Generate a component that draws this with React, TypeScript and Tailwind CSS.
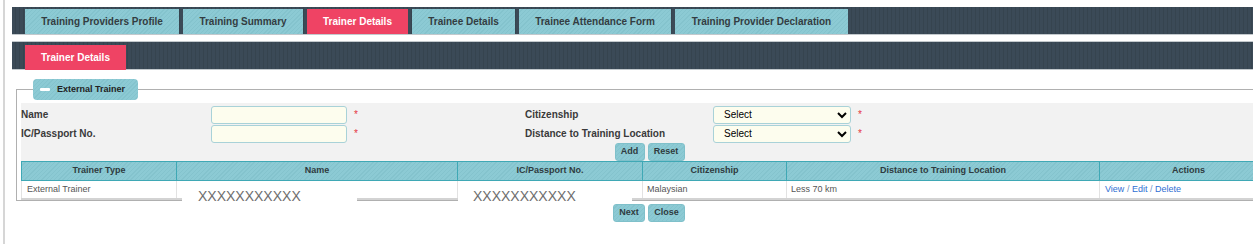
import React from "react"

const teal =
  "bg-[repeating-linear-gradient(135deg,#8ccad4_0px,#8ccad4_2px,#84c3cd_2px,#84c3cd_3px)]"
const dark =
  "bg-[repeating-linear-gradient(90deg,#3b4a57_0px,#3b4a57_3px,#36444f_3px,#36444f_4px)]"

const tabs = [
  { label: "Training Providers Profile", w: "w-[154px]" },
  { label: "Training Summary", w: "w-[120px]" },
  { label: "Trainer Details", w: "w-[101px]", active: true },
  { label: "Trainee Details", w: "w-[103px]" },
  { label: "Trainee Attendance Form", w: "w-[152px]" },
  { label: "Training Provider Declaration", w: "w-[173px]" },
]

const Btn = ({ children, w }: { children: React.ReactNode; w: string }) => (
  <button
    type="button"
    className={`${teal} ${w} h-[18px] rounded-[3px] border border-[#7fc0ca] text-[9px] font-bold text-[#2f3b40]`}
  >
    {children}
  </button>
)

const Redacted = ({ left, width, pad }: { left: string; width: string; pad: string }) => (
  <div
    className={`absolute top-[3px] ${left} ${width} ${pad} h-[20px] bg-white text-[14px] leading-[19px] text-[#6e6e6e] pt-[3px]`}
  >
    XXXXXXXXXXX
  </div>
)

export default function App() {
  return (
    <div className="flex w-[1253px] h-[244px] overflow-hidden bg-white font-['Liberation_Sans',Arial,sans-serif]">
      <div className="w-[3px] shrink-0" />
      <div className="w-[2px] shrink-0 bg-[#d6d6d6]" />
      <div className="w-[7px] shrink-0" />

      <div className="w-[1290px] shrink-0">
        {/* main tabs */}
        <div className={`mt-[7px] h-[28px] ${dark} border-b border-[#c3c9cd] flex items-end gap-[4px] pl-[13px]`}>
          {tabs.map((t) => (
            <div
              key={t.label}
              className={`${t.w} h-[25px] flex items-center justify-center text-[10px] font-bold ${
                t.active ? "bg-[#ef4364] text-white" : `${teal} text-[#333d42]`
              }`}
            >
              {t.label}
            </div>
          ))}
        </div>

        {/* sub tabs */}
        <div className={`mt-[6px] h-[29px] ${dark} border-y border-[#c3c9cd] flex items-end pl-[13px]`}>
          <div className="w-[101px] h-[25px] -mb-[1px] bg-[#ef4364] text-white text-[10px] font-bold flex items-center justify-center">
            Trainer Details
          </div>
        </div>

        <fieldset className="mt-[9px] ml-[4px] w-[1266px] border border-[#b0b0b0] px-[4px] pt-[3px]">
          <legend className={`ml-[12px] w-[105px] h-[21px] rounded-[4px] ${teal} flex items-center pl-[7px] gap-[7px]`}>
            <span className="w-[10px] h-[3px] rounded-[1px] bg-white" />
            <span className="text-[9px] font-bold text-[#222]">External Trainer</span>
          </legend>

          <div className="bg-[#f2f2f2] pt-[2px] text-[10px] font-bold text-[#3a3a3a]">
            <div className="flex h-[19px] items-center">
              <label className="w-[190px]">Name</label>
              <input className="w-[136px] h-[18px] rounded-[3px] border border-[#a9d2d8] bg-[#fdfdee]" />
              <span className="w-[178px] pl-[7px] text-[#e5343f] font-normal">*</span>
              <label className="w-[188px]">Citizenship</label>
              <select className="w-[138px] h-[18px] rounded-[3px] border border-[#a9d2d8] bg-[#fdfdee] pl-[6px] text-[10px] font-normal text-black">
                <option>Select</option>
              </select>
              <span className="pl-[7px] text-[#e5343f] font-normal">*</span>
            </div>
            <div className="flex h-[19px] items-center">
              <label className="w-[190px]">IC/Passport No.</label>
              <input className="w-[136px] h-[18px] rounded-[3px] border border-[#a9d2d8] bg-[#fdfdee]" />
              <span className="w-[178px] pl-[7px] text-[#e5343f] font-normal">*</span>
              <label className="w-[188px]">Distance to Training Location</label>
              <select className="w-[138px] h-[18px] rounded-[3px] border border-[#a9d2d8] bg-[#fdfdee] pl-[6px] text-[10px] font-normal text-black">
                <option>Select</option>
              </select>
              <span className="pl-[7px] text-[#e5343f] font-normal">*</span>
            </div>
            <div className="flex justify-center gap-[3px]">
              <Btn w="w-[30px]">Add</Btn>
              <Btn w="w-[37px]">Reset</Btn>
            </div>
          </div>

          <table className="w-[1256px] table-fixed border-collapse border-b-2 border-[#d3d3d3] text-[9px]">
            <colgroup>
              <col className="w-[155px]" />
              <col className="w-[281px]" />
              <col className="w-[185px]" />
              <col className="w-[144px]" />
              <col className="w-[313px]" />
              <col className="w-[178px]" />
            </colgroup>
            <thead>
              <tr className={`${teal} h-[19px]`}>
                {["Trainer Type", "Name", "IC/Passport No.", "Citizenship", "Distance to Training Location", "Actions"].map((h) => (
                  <th key={h} className="border border-[#3fa8b5] font-bold text-[#2f3b40] text-center p-0">
                    {h}
                  </th>
                ))}
              </tr>
            </thead>
            <tbody>
              <tr className="h-[18px] text-[#555]">
                <td className="border-l border-r border-[#e2e2e2] pl-[5px]">External Trainer</td>
                <td className="relative border-r border-[#e2e2e2]">
                  <Redacted left="left-[5px]" width="w-[175px]" pad="pl-[16px]" />
                </td>
                <td className="relative border-r border-[#e2e2e2]">
                  <Redacted left="left-0" width="w-[174px]" pad="pl-[15px]" />
                </td>
                <td className="border-r border-[#e2e2e2] pl-[4px]">Malaysian</td>
                <td className="border-r border-[#e2e2e2] pl-[4px]">Less 70 km</td>
                <td className="pl-[5px] text-[#2f6fd3]">
                  <a>View</a> <span className="text-[#6b8fc8]">/</span> <a>Edit</a>{" "}
                  <span className="text-[#6b8fc8]">/</span> <a>Delete</a>
                </td>
              </tr>
            </tbody>
          </table>
        </fieldset>

        <div className="ml-[4px] w-[1266px] mt-[3px] flex justify-center gap-[3px]">
          <Btn w="w-[32px]">Next</Btn>
          <Btn w="w-[37px]">Close</Btn>
        </div>
      </div>
    </div>
  )
}
